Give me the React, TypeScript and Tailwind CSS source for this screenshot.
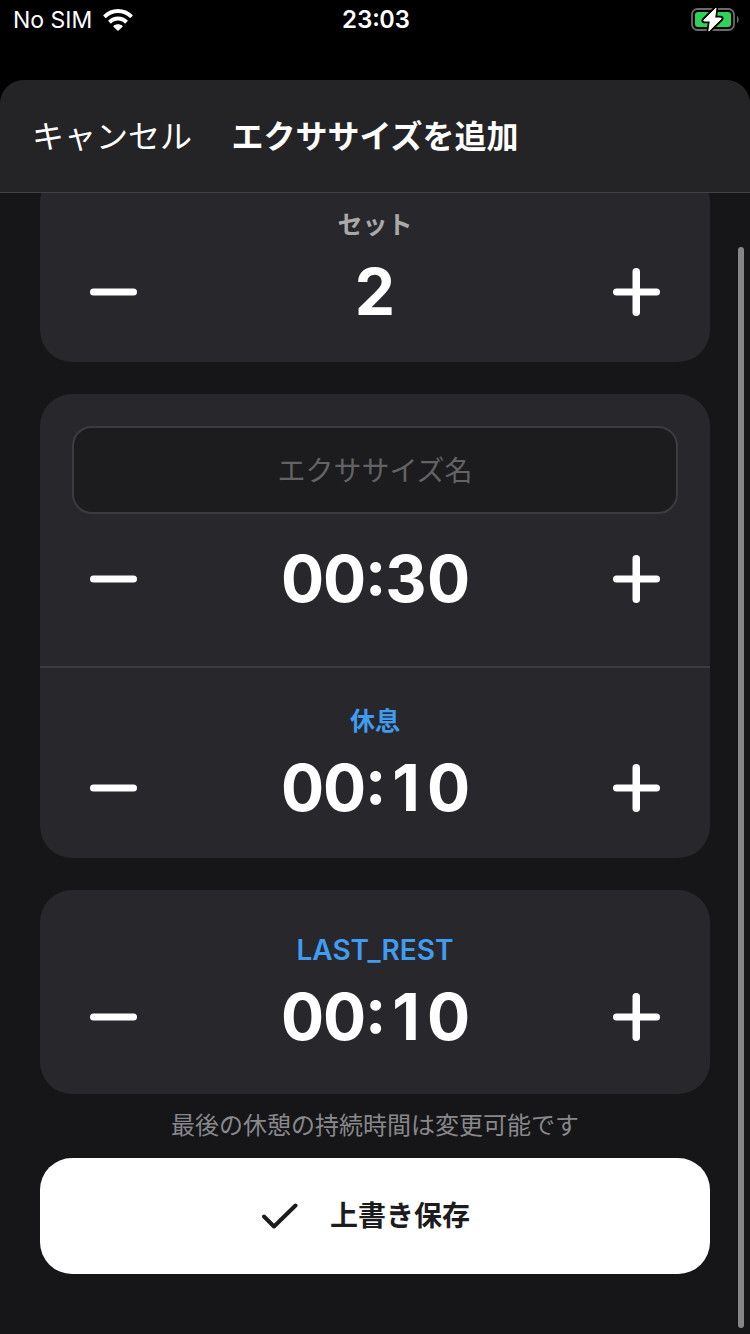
import { useState } from "react";

function MinusIcon() {
  return (
    <svg width="48" height="48" viewBox="0 0 48 48" aria-hidden="true">
      <rect x="1" y="20.5" width="47" height="7" rx="3.5" fill="#fff" />
    </svg>
  );
}

function PlusIcon() {
  return (
    <svg width="48" height="48" viewBox="0 0 48 48" aria-hidden="true">
      <rect x="0" y="20.5" width="47" height="7" rx="3.5" fill="#fff" />
      <rect x="19.500" y="0" width="7.500" height="48" rx="3.750" fill="#fff" />
    </svg>
  );
}

function WifiIcon() {
  return (
    <svg width="30" height="22" viewBox="0 0 30 22" aria-hidden="true" fill="#fff">
      <path d="M15 0C20.700 0 25.800 2.200 29.500 5.900Q30 6.400 29.500 6.900L27.700 8.700Q27.200 9.200 26.700 8.700C23.600 5.700 19.500 4 15 4S6.400 5.700 3.300 8.700Q2.800 9.200 2.300 8.700L.5 6.900Q0 6.400 .5 5.900C4.200 2.200 9.300 0 15 0Z" />
      <path d="M15 7.600C18.700 7.600 22 9 24.500 11.300Q25 11.800 24.500 12.300L22.600 14.200Q22.100 14.600 21.600 14.200C19.800 12.600 17.500 11.600 15 11.600S10.200 12.600 8.400 14.200Q7.900 14.600 7.400 14.200L5.500 12.300Q5 11.800 5.500 11.300C8 9 11.300 7.600 15 7.600Z" />
      <path d="M15 15.200C16.700 15.200 18.200 15.700 19.400 16.700Q20 17.200 19.500 17.700L15.600 21.600Q15 22.100 14.400 21.600L10.500 17.700Q10 17.200 10.600 16.700C11.800 15.700 13.300 15.200 15 15.200Z" />
    </svg>
  );
}

function BatteryIcon() {
  const bolt = "M25 1L13 13.100Q12.300 14 13.400 14H19.300L17.800 24L30 11.900Q30.700 11 29.600 11H23.700Z";
  return (
    <svg width="48" height="26" viewBox="0 0 48 26" role="img" aria-label="充電中">
      <rect x="1" y="2" width="42" height="21" rx="5.500" fill="none" stroke="#6b6b6d" strokeWidth="1.800" />
      <path d="M46 9C48.200 10 48.200 15 46 16Z" fill="#6b6b6d" />
      <rect x="4" y="5" width="36" height="15" rx="3" fill="#30d158" />
      <path d={bolt} fill="#000" stroke="#000" strokeWidth="4.500" strokeLinejoin="round" />
      <path d={bolt} fill="#fff" stroke="#fff" strokeWidth="1" strokeLinejoin="round" />
    </svg>
  );
}

type StepperProps = {
  name: string;
  value: number;
  step: number;
  format: (n: number) => string;
  onChange: (n: number) => void;
};

// Every digit gets a slot of equal width, so the value does not jump while it changes.
function Digits({ text }: { text: string }) {
  return (
    <>
      {text.split("").map((c, i) => (
        <span
          key={i}
          className={
            c === ":"
              ? "inline-block w-[20px] text-center [font-feature-settings:'case']"
              : "inline-block w-[42px] text-center"
          }
        >
          {c}
        </span>
      ))}
    </>
  );
}

function Stepper({ name, value, step, format, onChange }: StepperProps) {
  return (
    <div className="flex items-center justify-between px-12">
      <button
        type="button"
        aria-label={`${name} −`}
        onClick={() => onChange(Math.max(0, value - step))}
        className="flex h-16 w-[50px] items-center justify-center"
      >
        <MinusIcon />
      </button>
      <output className="text-[64px] leading-[64px] font-bold">
        <Digits text={format(value)} />
      </output>
      <button
        type="button"
        aria-label={`${name} +`}
        onClick={() => onChange(value + step)}
        className="flex h-16 w-[50px] items-center justify-center"
      >
        <PlusIcon />
      </button>
    </div>
  );
}

const plain = (n: number) => String(n);
const clock = (n: number) =>
  `${String(Math.floor(n / 60)).padStart(2, "0")}:${String(n % 60).padStart(2, "0")}`;

export default function App() {
  const [sets, setSets] = useState(2);
  const [work, setWork] = useState(30);
  const [rest, setRest] = useState(10);
  const [lastRest, setLastRest] = useState(10);

  return (
    <div className="flex min-h-screen flex-col bg-black font-['Inter','Noto_Sans_CJK_JP',sans-serif] text-white">
      <div className="grid h-20 grid-cols-[1fr_auto_1fr] items-start pr-[11px] pl-[13px]">
        <div className="flex h-10 items-center gap-[11px] text-[23px]">
          <span>No SIM</span>
          <WifiIcon />
        </div>
        <div className="flex h-10 items-center text-[24px] font-semibold tabular-nums">23:03</div>
        <div className="flex h-10 items-center justify-end">
          <BatteryIcon />
        </div>
      </div>

      <div className="relative flex grow flex-col overflow-hidden rounded-t-[24px] bg-[#161618]">
        <header className="relative z-10 grid h-[113px] grid-cols-[1fr_auto_1fr] items-center border-b border-[#414144] bg-[#242426] px-8 pt-0.5 text-[32px]">
          <button type="button" className="justify-self-start">
            キャンセル
          </button>
          <h1 className="font-semibold">エクササイズを追加</h1>
        </header>

        <main className="-mt-[23px] flex flex-col px-10 pb-[60px]">
          <section className="rounded-[32px] bg-[#28282c] pt-[37px] pb-[38px]">
            <h2 className="mb-[17px] text-center text-[25px] leading-9 font-semibold text-[#a9a9a9]">セット</h2>
            <Stepper name="セット" value={sets} step={1} format={plain} onChange={setSets} />
          </section>

          <section className="mt-8 rounded-[32px] bg-[#28282c]">
            <div className="border-b-2 border-[#3c3c40] pt-8 pb-[55px]">
              <div className="mb-[33px] px-8">
                <input
                  type="text"
                  aria-label="エクササイズ名"
                  placeholder="エクササイズ名"
                  className="h-[88px] w-full rounded-[20px] border-2 border-[#3c3c40] bg-[#1c1c1e] px-4 pt-0.5 text-center text-[28px] outline-none placeholder:text-[#636363]"
                />
              </div>
              <Stepper name="エクササイズ" value={work} step={5} format={clock} onChange={setWork} />
            </div>
            <div className="pt-[35px] pb-[38px]">
              <h2 className="mb-[17px] text-center text-[25px] leading-9 font-semibold text-[#409cf0]">休息</h2>
              <Stepper name="休息" value={rest} step={5} format={clock} onChange={setRest} />
            </div>
          </section>

          <section className="mt-8 rounded-[32px] bg-[#28282c] pt-[42px] pb-[45px]">
            <h2 className="mb-[17px] text-center text-[28px] leading-9 font-semibold text-[#409cf0]">LAST_REST</h2>
            <Stepper name="LAST_REST" value={lastRest} step={5} format={clock} onChange={setLastRest} />
          </section>

          <p className="text-center text-[24px] leading-[64px] text-[#88888c]">
            最後の休憩の持続時間は変更可能です
          </p>

          <button
            type="button"
            className="flex h-[116px] items-center justify-center gap-8 rounded-[32px] bg-white pr-[18px] text-[28px] font-semibold text-[#1c1c1e]"
          >
            <svg width="36" height="26" viewBox="0 0 36 26" fill="none" aria-hidden="true">
              <path d="M2 13.500L12 23.500L33.500 2.500" stroke="#1c1c1e" strokeWidth="4" strokeLinecap="round" strokeLinejoin="round" />
            </svg>
            上書き保存
          </button>
        </main>

        <div className="absolute top-[167px] right-[6px] bottom-[6px] w-[6px] rounded-full bg-[#868688]" />
      </div>
    </div>
  );
}
